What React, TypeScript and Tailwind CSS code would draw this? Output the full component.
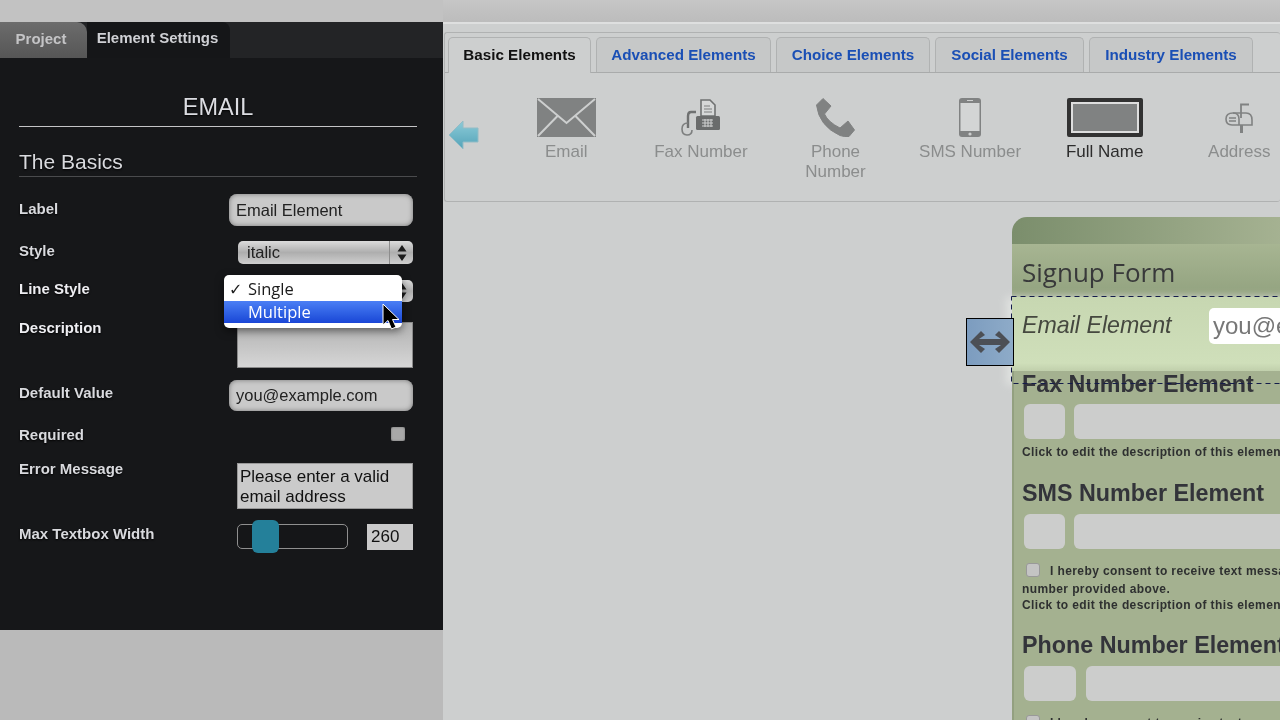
import { ReactNode } from 'react';

const labelCls = "text-[15px] leading-4 font-bold text-[#d9dade] [text-shadow:0_1px_2px_#000]";
const inputCls = "flex h-full w-[184px] items-center rounded-lg bg-[#c9c9c9] pl-[7px] text-[16.5px] text-[#222] shadow-[inset_0_0_5px_#777]";

function Row({ label, className, labelClass = "", children }: { label: string; className: string; labelClass?: string; children: ReactNode }) {
  return (
    <div className={`flex justify-between pr-[4px] ${className}`}>
      <div className={`${labelCls} ${labelClass}`}>{label}</div>
      {children}
    </div>
  );
}

function UpDown() {
  return (
    <svg width="10" height="16" viewBox="0 0 10 16" className="shrink-0">
      <path d="M5 0 L9.5 6.5 H0.5 Z M5 16 L0.5 9.5 H9.5 Z" fill="#1c1c1c" />
    </svg>
  );
}

function SelectBox({ value }: { value: string }) {
  return (
    <div className="flex h-full w-[175px] items-center rounded-[5px] bg-gradient-to-b from-[#dcdcdc] via-[#aeaeae] to-[#cfcfcf] pl-[9px] text-[16.5px] text-[#222]">
      <span className="flex-1">{value}</span>
      <div className="flex h-full w-[24px] items-center justify-center border-l border-[#8d8d8d]">
        <UpDown />
      </div>
    </div>
  );
}

function SettingsPanel() {
  return (
    <div className="relative h-[608px] rounded-tr-[4px] bg-[#161719]">
      <div className="flex h-[36px] bg-[#232426] text-[15px] font-bold">
        <div className="flex w-[87px] items-center justify-center rounded-tr-[10px] bg-gradient-to-b from-[#6c6c6c] to-[#565656] pb-[2px] pr-[5px] text-[#c4c4c6]">Project</div>
        <div className="flex w-[143px] items-center justify-center rounded-tr-[8px] bg-[#151618] pb-[3px] pr-[2px] text-[#cfd0d4]">Element Settings</div>
      </div>
      <div className="pl-[19px] pr-[26px]">
        <div className="mt-[35px] h-[34px] border-b border-[#c4c4c6] text-center text-[23.5px] leading-[28px] text-[#dcdde2] [text-shadow:0_1px_2px_#000]">EMAIL</div>
        <div className="mt-[21px] h-[29px] border-b border-[#4a4b4d] text-[21px] leading-[28px] text-[#d9dade] [text-shadow:0_1px_2px_#000]">The Basics</div>

        <Row label="Label" labelClass="mb-[2px]" className="mt-[17px] h-[32px] items-center">
          <div className={inputCls}>Email Element</div>
        </Row>
        <Row label="Style" labelClass="mb-[4px]" className="mt-[15px] h-[23px] items-center">
          <SelectBox value="italic" />
        </Row>
        <Row label="Line Style" labelClass="mb-[4px] text-[#eeeef2]" className="mt-[16px] h-[22px] items-center">
          <SelectBox value="" />
        </Row>
        <Row label="Description" labelClass="-mt-[2px] text-[#eeeef2]" className="mt-[20px] h-[46px] items-start">
          <div className="h-full w-[176px] border border-[#8a8a8a] bg-gradient-to-b from-[#b2b2b2] to-[#d6d6d6]" />
        </Row>
        <Row label="Default Value" labelClass="mb-[6px]" className="mt-[12px] h-[31px] items-center">
          <div className={inputCls}>you@example.com</div>
        </Row>
        <Row label="Required" labelClass="mt-[2px]" className="mt-[16px] h-[14px] items-center">
          <div className="mr-[8px] mt-[-1px] size-[14px] rounded-[2px] bg-[#a8a8a8] shadow-[inset_0_0_2px_#666]" />
        </Row>
        <Row label="Error Message" labelClass="-mt-[2px]" className="mt-[22px] h-[46px] items-start">
          <div className="h-full w-[176px] border border-[#999] bg-[#cacaca] pl-[2px] pt-[3px] text-[17px] leading-[20px] text-[#111]">
            Please enter a valid email address
          </div>
        </Row>
        <Row label="Max Textbox Width" labelClass="mb-[6px]" className="mt-[15px] h-[26px] items-center">
          <div className="flex h-full w-[176px] items-start justify-between">
            <div className="relative h-[25px] w-[111px] rounded-[5px] border border-[#8f8f8f] bg-[#151618]">
              <div className="absolute left-[14px] top-[-5px] h-[33px] w-[27px] rounded-[6px] bg-[#24809a]" />
            </div>
            <div className="flex h-full w-[46px] items-center bg-[#cacaca] pl-[4px] text-[17px] text-[#111]">260</div>
          </div>
        </Row>
      </div>

      {/* open native select menu over Line Style */}
      <div className="absolute left-[224px] top-[253px] h-[53px] w-[178px] rounded-[5px] bg-white pt-[3px] font-['Open_Sans',sans-serif] text-[16.5px] shadow-[0_3px_8px_rgba(0,0,0,0.5)]">
        <div className="flex h-[23px] items-center text-[#1b1b1b]">
          <span className="w-[24px] pl-[5px] font-['DejaVu_Sans',sans-serif] text-[16px]">✓</span>
          <span>Single</span>
        </div>
        <div className="flex h-[22px] items-center bg-gradient-to-b from-[#4b7ff5] to-[#1a45d6] pl-[24px] font-medium text-white">Multiple</div>
      </div>
    </div>
  );
}

function ElementItem({ label, active, children }: { label: ReactNode; active?: boolean; children: ReactNode }) {
  return (
    <div className="flex w-[134.6px] shrink-0 flex-col items-center">
      <div className="flex h-[39px] items-center justify-center">{children}</div>
      <div className={`mt-[5px] whitespace-nowrap text-center text-[17px] leading-[20px] ${active ? "text-[#2c2c2c]" : "text-[#8b8d8d]"}`}>{label}</div>
    </div>
  );
}

function TabStrip() {
  const tabs = [
    { name: "Advanced Elements", w: "w-[175px]" },
    { name: "Choice Elements", w: "w-[154px]" },
    { name: "Social Elements", w: "w-[149px]" },
    { name: "Industry Elements", w: "w-[164px]" },
  ];
  return (
    <div className="flex h-[40px] items-end gap-[5px] border-b border-[#a9abab] pl-[3px] text-[15.2px] font-bold">
      <div className="relative top-[1px] flex h-[36px] w-[143px] items-center justify-center rounded-t-[5px] border border-b-0 border-[#b0b2b2] bg-[#cdcfcf] text-[#111]">Basic Elements</div>
      {tabs.map((t) => (
        <div key={t.name} className={`flex h-[35px] items-center justify-center rounded-t-[5px] border border-b-0 border-[#b0b2b2] bg-[#c6c8c8] text-[#1a4fb5] ${t.w}`}>
          {t.name}
        </div>
      ))}
    </div>
  );
}

function ElementPalette() {
  return (
    <div className="ml-[1px] h-[170px] overflow-hidden rounded-[3px] border-y border-l border-[#b0b2b2] bg-[#cdcfcf]">
      <TabStrip />
      <div className="mt-[25px] flex">
        <svg width="32" height="32" viewBox="0 0 32 32" className="ml-[3px] mr-[19px] mt-[21px] shrink-0">
          <defs>
            <linearGradient id="arrowFill" x1="0" y1="0" x2="0" y2="1">
              <stop offset="0" stopColor="#8ccbd8" />
              <stop offset="1" stopColor="#54a3b8" />
            </linearGradient>
          </defs>
          <path d="M1 16 L15 2 V9 H30 V23 H15 V30 Z" fill="url(#arrowFill)" stroke="#93bcc6" strokeWidth="1" />
        </svg>
        <ElementItem label="Email">
          <svg width="59" height="39" viewBox="0 0 59 39">
            <rect width="59" height="39" fill="#808282" />
            <path d="M1 1 L29.5 25 L58 1 M1 38 L20.5 18 M58 38 L38.5 18" fill="none" stroke="#cdcfcf" strokeWidth="2" />
          </svg>
        </ElementItem>
        <ElementItem label="Fax Number">
          <svg width="39" height="37" viewBox="0 0 39 37">
            <path d="M20 1 H29 L34 6 V17 H20 Z" fill="#d6d8d8" stroke="#6f7171" strokeWidth="1.6" />
            <path d="M23 7 H29 M23 10 H31 M23 13 H31" stroke="#7d7f7f" strokeWidth="1.2" />
            <rect x="15" y="17" width="24" height="14" rx="1.5" fill="#6a6c6c" />
            <path d="M21 21 H32 M21 24 H32 M21 27 H32 M24 20 V28 M27 20 V28 M30 20 V28" stroke="#cdcfcf" strokeWidth="1.1" />
            <path d="M15 13 H10 Q7 13 7 17 V29" fill="none" stroke="#6f7171" strokeWidth="2.4" />
            <path d="M7 24 Q1 24 1 30 Q1 36 6 36 Q11 36 11 31" fill="none" stroke="#7d7f7f" strokeWidth="1.6" />
          </svg>
        </ElementItem>
        <ElementItem label={<>Phone<br />Number</>}>
          <svg width="39" height="39" viewBox="0 0 39 39">
            <path d="M0.5 7 L7 0.5 L15 8 L8.5 16 Q12 24 24 30 L32 23 L38.5 32 L33 38.5 Q28 39 24 37.5 Q3 28 0.5 7 Z" fill="#808282" strokeLinejoin="round" stroke="#808282" strokeWidth="1" />
          </svg>
        </ElementItem>
        <ElementItem label="SMS Number">
          <svg width="22" height="39" viewBox="0 0 22 39">
            <rect width="22" height="39" rx="3" fill="#808282" />
            <rect x="1.5" y="5" width="19" height="28" fill="#d3d5d5" />
            <rect x="8" y="2" width="6" height="1" fill="#cdcfcf" />
            <circle cx="11" cy="36" r="1.6" fill="#cdcfcf" />
          </svg>
        </ElementItem>
        <ElementItem label="Full Name" active>
          <div className="h-[39px] w-[76px] rounded-[2px] border-[4px] border-[#323232] bg-[#808282] shadow-[inset_0_0_0_2px_#dedede]" />
        </ElementItem>
        <ElementItem label="Address">
          <svg width="28" height="30" viewBox="0 0 28 30">
            <path d="M8 10 H21 Q27 10 27 17 V22 H7 Q1 22 1 16 Q1 10 8 10 Z" fill="none" stroke="#808282" strokeWidth="1.6" />
            <path d="M14 22 V16 Q14 10 8 10" fill="none" stroke="#808282" strokeWidth="1.6" />
            <path d="M16 15 V1.5 H24" fill="none" stroke="#808282" strokeWidth="1.8" />
            <path d="M15 22 H18 V30 H15 Z" fill="#808282" />
            <path d="M4 15 H11 M4 18 H11" stroke="#808282" strokeWidth="1.3" />
          </svg>
        </ElementItem>
      </div>
    </div>
  );
}

const headingCls = "text-[23.3px] leading-[26px] font-bold text-[#33343a]";
const fieldCls = "h-[35px] rounded-[6px] bg-[#cccdcc]";
const descCls = "text-[12px] leading-[16px] font-bold tracking-[0.4px] text-[#2e3030] whitespace-nowrap";

function ConsentLine() {
  return (
    <div className="mt-[14px] flex h-[16px] items-center pl-[4px]">
      <div className="-mt-[3px] size-[14px] rounded-[3px] border border-[#999] bg-[#c4c4c4]" />
      <div className={`ml-[10px] ${descCls}`}>I hereby consent to receive text messages</div>
    </div>
  );
}

function SignupForm() {
  return (
    <div className="relative ml-[569px] mt-[15px] w-[268px] shrink-0">
      {/* move handle on the selected element */}
      <div className="absolute left-[-46px] top-[101px] z-30 flex h-[48px] w-[48px] items-center justify-center border border-black bg-gradient-to-r from-[#7c9cbf] to-[#8eabc8]">
        <svg width="42" height="24" viewBox="0 0 42 24">
          <path d="M1 12 L12 1 L16 5 L10 9 H32 L26 5 L30 1 L41 12 L30 23 L26 19 L32 15 H10 L16 19 L12 23 Z" fill="#4c4f55" />
        </svg>
      </div>

      {/* dashed selection marquee */}
      <svg width="300" height="89" className="absolute left-[-1px] top-[79px] z-20">
        <rect x="0.5" y="0.5" width="320" height="87" fill="none" stroke="#141c4a" strokeWidth="1" strokeDasharray="5 4" />
      </svg>

      <div className="h-[27px] w-[300px] rounded-tl-[15px] bg-gradient-to-r from-[#7b8e6c] to-[#aab696]" />
      <div className="flex h-[53px] w-[300px] items-center bg-gradient-to-b from-[#a7b592] to-[#92a27f] pl-[10px] pt-[3px] font-['Open_Sans',sans-serif] text-[26px] font-medium text-[#38393a]">Signup Form</div>
      <div className="h-[88px] w-[300px] bg-gradient-to-b from-[#c7d7b1] via-[#cfdfba] via-75% to-[#a8b594] pl-[10px] pt-[11px] shadow-[-6px_0_8px_#dfe1df]">
        <div className="flex">
          <div className="w-[187px] text-[23.2px] italic leading-[34px] text-[#45483f]">Email Element</div>
          <div className="h-[36px] w-[100px] rounded-[5px] bg-white pl-[4px] text-[24px] leading-[36px] text-[#777]">you@example</div>
        </div>
      </div>
      <div className="h-[360px] w-[300px] border-l-2 border-[#93a080] bg-[#a4b190] pl-[8px]">
        <div className={`relative z-10 -mt-[14px] ${headingCls}`}>Fax Number Element</div>
        <div className="mt-[7px] flex gap-[9px] pl-[2px]">
          <div className={`${fieldCls} w-[41px]`} />
          <div className={`${fieldCls} flex-1`} />
        </div>
        <div className={`mt-[5px] ${descCls}`}>Click to edit the description of this element</div>
        <div className={`mt-[20px] ${headingCls}`}>SMS Number Element</div>
        <div className="mt-[8px] flex gap-[9px] pl-[2px]">
          <div className={`${fieldCls} w-[41px]`} />
          <div className={`${fieldCls} flex-1`} />
        </div>
        <ConsentLine />
        <div className={`mt-[2px] ${descCls}`}>number provided above.</div>
        <div className={descCls}>Click to edit the description of this element</div>
        <div className={`mt-[19px] whitespace-nowrap ${headingCls}`}>Phone Number Element</div>
        <div className="mt-[8px] flex gap-[10px] pl-[2px]">
          <div className={`${fieldCls} w-[52px]`} />
          <div className={`${fieldCls} flex-1`} />
        </div>
        <ConsentLine />
      </div>
    </div>
  );
}

export default function App() {
  return (
    <div className="relative flex h-[720px] w-[1280px] overflow-hidden bg-[#cdcfcf] font-['Liberation_Sans',Arial,sans-serif] blur-[0.4px]">
      {/* Left: settings */}
      <div className="flex w-[443px] shrink-0 flex-col bg-[#bababa]">
        <div className="h-[22px] bg-[#c2c2c2]" />
        <SettingsPanel />
      </div>

      {/* Right: palette + canvas */}
      <div className="flex min-w-0 flex-1 flex-col">
        <div className="h-[22px] shrink-0 bg-gradient-to-b from-[#c6c6c6] to-[#bcbcbc]" />
        <div className="h-[2px] shrink-0 bg-[#dedfdf]" />
        <div className="mt-[8px] shrink-0">
          <ElementPalette />
        </div>
        <SignupForm />
      </div>

      {/* mouse pointer */}
      <svg width="20" height="28" viewBox="0 0 20 28" className="absolute left-[381px] top-[303px]">
        <path d="M2 1 V22 L7 17.5 L10.5 26 L15 24 L11.5 16.5 H18 Z" fill="#000" stroke="#fff" strokeWidth="1" />
      </svg>
    </div>
  );
}
